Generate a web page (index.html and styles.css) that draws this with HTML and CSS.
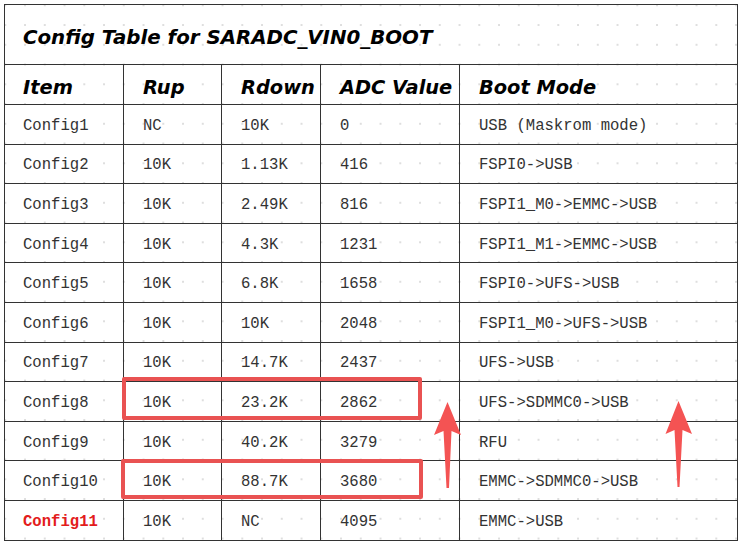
FILE: index.html
```html
<!DOCTYPE html>
<html>
<head>
<meta charset="utf-8">
<link rel="stylesheet" href="styles.css">
</head>
<body>
<div class="page">
  <table class="cfg">
    <colgroup>
      <col class="c1"><col class="c2"><col class="c3"><col class="c4"><col class="c5">
    </colgroup>
    <tr class="title-row"><th colspan="5" class="title">Config Table for SARADC_VIN0_BOOT</th></tr>
    <tr class="head-row"><th>Item</th><th>Rup</th><th>Rdown</th><th>ADC Value</th><th>Boot Mode</th></tr>
    <tr class="row"><td>Config1</td><td>NC</td><td>10K</td><td>0</td><td>USB (Maskrom mode)</td></tr>
    <tr class="row"><td>Config2</td><td>10K</td><td>1.13K</td><td>416</td><td>FSPI0-&gt;USB</td></tr>
    <tr class="row"><td>Config3</td><td>10K</td><td>2.49K</td><td>816</td><td>FSPI1_M0-&gt;EMMC-&gt;USB</td></tr>
    <tr class="row"><td>Config4</td><td>10K</td><td>4.3K</td><td>1231</td><td>FSPI1_M1-&gt;EMMC-&gt;USB</td></tr>
    <tr class="row"><td>Config5</td><td>10K</td><td>6.8K</td><td>1658</td><td>FSPI0-&gt;UFS-&gt;USB</td></tr>
    <tr class="row"><td>Config6</td><td>10K</td><td>10K</td><td>2048</td><td>FSPI1_M0-&gt;UFS-&gt;USB</td></tr>
    <tr class="row"><td>Config7</td><td>10K</td><td>14.7K</td><td>2437</td><td>UFS-&gt;USB</td></tr>
    <tr class="row"><td>Config8</td><td>10K</td><td>23.2K</td><td>2862</td><td>UFS-&gt;SDMMC0-&gt;USB</td></tr>
    <tr class="row"><td>Config9</td><td>10K</td><td>40.2K</td><td>3279</td><td>RFU</td></tr>
    <tr class="row"><td>Config10</td><td>10K</td><td>88.7K</td><td>3680</td><td>EMMC-&gt;SDMMC0-&gt;USB</td></tr>
    <tr class="row"><td class="hl">Config11</td><td>10K</td><td>NC</td><td>4095</td><td>EMMC-&gt;USB</td></tr>
  </table>
  <div class="mark mark-a"></div>
  <div class="mark mark-b"></div>
  <svg class="arrows" width="741" height="544" viewBox="0 0 741 544">
    <polygon points="447.5,402 461,435 451.5,431 449,488 446.5,488 443.5,431 434,435" fill="#f45353"/>
    <polygon points="678.5,401 692,434 682.5,430 679.5,487 677.5,487 674.5,430 665.5,434" fill="#f45353"/>
  </svg>
</div>
</body>
</html>
```

FILE: styles.css
```css
html, body {
  margin: 0;
  padding: 0;
  background: #fff;
}
.page {
  position: relative;
  width: 741px;
  height: 544px;
  padding: 4px 0 0 4px;
  box-sizing: border-box;
  background-color: #fff;
  background-image: radial-gradient(circle, #d6d6d6 0, #d6d6d6 0.6px, rgba(255,255,255,0) 1.1px);
  background-size: 19.75px 19.75px;
  background-position: -4.6px -4.6px;
}
.cfg {
  border-collapse: collapse;
  table-layout: fixed;
  width: 733px;
  border: 1px solid #333;
  border-top-color: #888;
}
.c1 { width: 119px; }
.c2 { width: 98px; }
.c3 { width: 99px; }
.c4 { width: 139px; }
.c5 { width: 278px; }
.cfg th, .cfg td {
  border: 1px solid #333;
  padding: 0 0 0 18px;
  text-align: left;
  white-space: nowrap;
  overflow: hidden;
  line-height: 20px;
}
.cfg td + td { padding-left: 19px; }
.cfg th {
  font-family: "DejaVu Sans", Verdana, sans-serif;
  font-weight: bold;
  font-style: italic;
  color: #000;
}
.title-row { height: 60px; }
.title-row th {
  font-size: 19.8px;
  padding-top: 7px;
}
.head-row { height: 40px; }
.head-row th {
  font-size: 19.4px;
  padding-top: 6px;
}
.head-row th + th { padding-left: 19px; }
.row { height: 39.6px; }
.cfg td {
  font-family: "Courier New", "Nimbus Mono PS", "FreeMono", "Liberation Mono", monospace;
  font-size: 15.6px;
  color: #333;
  padding-top: 3px;
}
.cfg td.hl {
  color: #e31c1c;
  font-weight: bold;
}
.mark {
  position: absolute;
  border: 4px solid #e95252;
  border-radius: 2px;
  box-sizing: border-box;
}
.mark-a {
  left: 122px;
  top: 377px;
  width: 300px;
  height: 43px;
}
.mark-b {
  left: 121px;
  top: 459px;
  width: 302px;
  height: 40px;
}
.arrows {
  position: absolute;
  left: 0;
  top: 0;
  pointer-events: none;
}
```
